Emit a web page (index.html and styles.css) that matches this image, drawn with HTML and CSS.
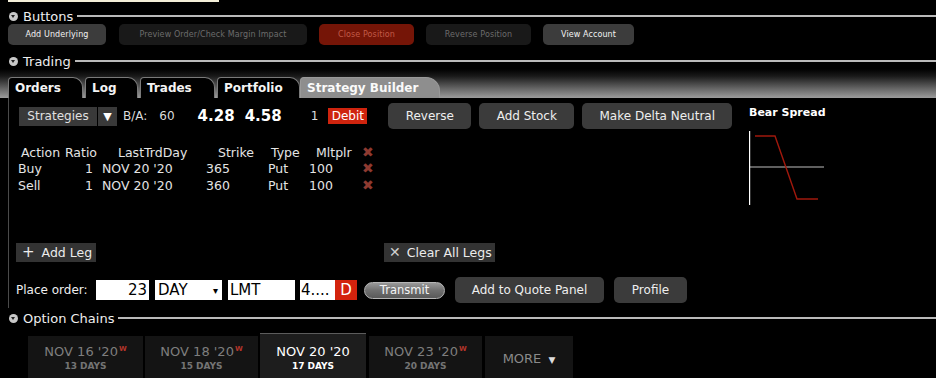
FILE: index.html
```html
<!DOCTYPE html>
<html lang="en">
<head>
    <meta charset="UTF-8">
    <title>Strategy Builder</title>
    <link rel="stylesheet" href="styles.css">
</head>
<body>
    <div class="top-strip"></div>

    <div class="section-head">
        <span class="toggle"></span>
        <span class="section-title">Buttons</span>
        <span class="section-line"></span>
    </div>
    <div class="top-buttons">
        <button class="tb tb-on w-under">Add Underlying</button>
        <button class="tb tb-off w-preview">Preview Order/Check Margin Impact</button>
        <button class="tb tb-red w-close">Close Position</button>
        <button class="tb tb-off w-rev">Reverse Position</button>
        <button class="tb tb-on w-view">View Account</button>
    </div>

    <div class="section-head trading-head">
        <span class="toggle"></span>
        <span class="section-title">Trading</span>
        <span class="section-line"></span>
    </div>
    <div class="tab-bar">
        <div class="tab w-orders">Orders</div>
        <div class="tab w-log">Log</div>
        <div class="tab w-trades">Trades</div>
        <div class="tab w-portfolio">Portfolio</div>
        <div class="tab tab-active w-sb">Strategy Builder</div>
    </div>

    <div class="panel">
        <div class="main">
            <div class="row-top">
                <div class="strategies">Strategies</div>
                <div class="dd">&#9660;</div>
                <span class="ba">B/A:</span>
                <span class="ba-size">60</span>
                <span class="price">4.28</span>
                <span class="price price-ask">4.58</span>
                <span class="qty">1</span>
                <span class="debit">Debit</span>
                <button class="btn w-reverse">Reverse</button>
                <button class="btn w-stock">Add Stock</button>
                <button class="btn w-delta">Make Delta Neutral</button>
            </div>

            <div class="legs">
                <div class="c1 h1">Action</div>
                <div class="c2 h2">Ratio</div>
                <div class="c3 h3">LastTrdDay</div>
                <div class="c4 h4">Strike</div>
                <div class="c5 h5">Type</div>
                <div class="c6 h6">Mltplr</div>
                <div class="c7">&#10006;</div>

                <div class="c1">Buy</div>
                <div class="c2">1</div>
                <div class="c3">NOV 20 '20</div>
                <div class="c4">365</div>
                <div class="c5">Put</div>
                <div class="c6">100</div>
                <div class="c7">&#10006;</div>

                <div class="c1">Sell</div>
                <div class="c2">1</div>
                <div class="c3">NOV 20 '20</div>
                <div class="c4">360</div>
                <div class="c5">Put</div>
                <div class="c6">100</div>
                <div class="c7">&#10006;</div>
            </div>

            <div class="row-legs">
                <div class="leg-btn w-add"><span class="leg-icon">+</span>Add Leg</div>
                <div class="leg-btn w-clear"><span class="leg-icon thin">&#10005;</span>Clear All Legs</div>
            </div>

            <div class="row-order">
                <span class="order-label">Place order:</span>
                <div class="field w-qty">23</div>
                <div class="field w-tif">DAY<span class="caret">&#9662;</span></div>
                <div class="field w-type">LMT</div>
                <div class="field w-price">4....</div>
                <div class="d-flag">D</div>
                <button class="transmit">Transmit</button>
                <button class="btn w-quote">Add to Quote Panel</button>
                <button class="btn w-profile">Profile</button>
            </div>
        </div>

        <div class="side">
            <div class="side-title">Bear Spread</div>
            <svg class="chart" width="76" height="76" viewBox="0 0 76 76">
                <line x1="0" y1="37" x2="75" y2="37" stroke="#bdbdbd" stroke-width="1.2"/>
                <polyline points="6,6 26,6 48,69 69,69" fill="none" stroke="#a0180c" stroke-width="1.4"/>
                <line x1="0.5" y1="1" x2="0.5" y2="75" stroke="#ffffff" stroke-width="1.4"/>
            </svg>
        </div>
    </div>

    <div class="section-head chains-head">
        <span class="toggle"></span>
        <span class="section-title">Option Chains</span>
        <span class="section-line"></span>
    </div>
    <div class="dates">
        <div class="date w-d1"><div class="date-name">NOV 16 '20<sup>W</sup></div><div class="date-days">13 DAYS</div></div>
        <div class="date w-d2"><div class="date-name">NOV 18 '20<sup>W</sup></div><div class="date-days">15 DAYS</div></div>
        <div class="date date-active w-d3"><div class="date-name">NOV 20 '20</div><div class="date-days">17 DAYS</div></div>
        <div class="date w-d4"><div class="date-name">NOV 23 '20<sup>W</sup></div><div class="date-days">20 DAYS</div></div>
        <div class="date w-more"><div class="more">MORE <span class="more-caret">&#9660;</span></div></div>
    </div>
</body>
</html>
```

FILE: styles.css
```css
body {
    margin: 0;
    background-color: #000;
    color: #e6e6e6;
    font-family: 'DejaVu Sans', sans-serif;
    font-size: 12px;
    width: 936px;
    height: 378px;
    overflow: hidden;
}

button {
    font-family: inherit;
    border: none;
    cursor: pointer;
    padding: 0;
}

.top-strip {
    width: 211px;
    height: 2px;
    margin-left: 8px;
    background-color: #f4efd9;
}

/* section headers */
.section-head {
    display: flex;
    align-items: center;
    height: 16px;
    margin-top: 6px;
    padding-left: 9px;
}

.toggle {
    width: 9px;
    height: 9px;
    border-radius: 50%;
    background-color: #c8c8c8;
    position: relative;
    margin-right: 5px;
}

.toggle::after {
    content: "";
    position: absolute;
    left: 2px;
    top: 3px;
    border-left: 2.5px solid transparent;
    border-right: 2.5px solid transparent;
    border-top: 3px solid #222;
}

.section-title {
    font-size: 13px;
    color: #eeeeee;
}

.section-line {
    flex: 1;
    height: 2px;
    background-color: #b9b9b9;
    margin-left: 4px;
}

/* top buttons */
.top-buttons {
    display: flex;
    gap: 12px;
    padding-left: 8px;
    height: 21px;
}

.tb {
    height: 21px;
    border-radius: 5px;
    font-size: 8px;
    letter-spacing: 0.1px;
}

.tb-on {
    background-color: #3c3c3c;
    color: #f2f2f2;
}

.tb-off {
    background-color: #191919;
    color: #6c6c6c;
}

.tb-red {
    background-color: #751507;
    color: #c25a48;
}

.w-under { width: 98px; }
.w-preview { width: 188px; margin-left: 1px; }
.w-close { width: 95px; }
.w-rev { width: 105px; }
.w-view { width: 91px; }

.trading-head {
    margin-top: 8px;
}

/* tab bar */
.tab-bar {
    display: flex;
    align-items: flex-end;
    gap: 2px;
    height: 29px;
    padding-left: 8px;
    background: linear-gradient(to bottom, #000 0%, #1a1a1a 25%, #6a6a6a 70%, #9c9c9c 100%);
}

.tab {
    height: 20px;
    background-color: #000;
    border: 1px solid #7a7a7a;
    border-bottom: none;
    border-radius: 4px 10px 0 0;
    font-weight: bold;
    font-size: 12px;
    color: #f4f4f4;
    padding-left: 6px;
    line-height: 21px;
}

.w-orders { width: 67px; }
.w-log { width: 45px; }
.w-trades { width: 67px; }
.w-portfolio { width: 75px; }

.tab-active {
    background-color: #8e8e8e;
    border-color: #9a9a9a;
    color: #fafafa;
    width: 132px;
    margin-left: -2px;
    border-radius: 4px 14px 0 0;
}

/* strategy builder panel */
.panel {
    display: flex;
    height: 210px;
    margin-left: 8px;
    border-left: 1px solid #4a4a4a;
}

.main {
    width: 732px;
    padding-left: 7px;
}

.row-top {
    display: flex;
    align-items: center;
    height: 26px;
    margin-top: 5px;
}

.strategies {
    width: 78px;
    height: 19px;
    line-height: 19px;
    margin-left: 3px;
    background-color: #393939;
    text-align: center;
    color: #e0e0e0;
}

.dd {
    width: 19px;
    height: 19px;
    line-height: 19px;
    margin-left: 1px;
    background-color: #393939;
    text-align: center;
    color: #fff;
    font-size: 11px;
}

.ba {
    margin-left: 6px;
    color: #dcdcdc;
}

.ba-size {
    margin-left: 12px;
    color: #dcdcdc;
}

.price {
    font-weight: bold;
    font-size: 15px;
    color: #fff;
    margin-left: 23px;
}

.price-ask {
    margin-left: 10px;
}

.qty {
    margin-left: 29px;
    color: #dcdcdc;
}

.debit {
    margin-left: 10px;
    width: 39px;
    height: 16px;
    line-height: 16px;
    text-align: center;
    background-color: #cf240e;
    color: #fff;
}

.btn {
    height: 26px;
    border-radius: 5px;
    background-color: #3b3b3b;
    color: #eeeeee;
    font-size: 12px;
}

.w-reverse { width: 83px; margin-left: 21px; }
.w-stock { width: 95px; margin-left: 8px; }
.w-delta { width: 150px; margin-left: 8px; }

/* legs table */
.legs {
    display: grid;
    grid-template-columns: 45px 35px 102px 65px 40px 55px 15px;
    grid-template-rows: 16px 16px 18px;
    align-items: center;
    margin-top: 15px;
    margin-left: 2px;
    color: #e4e4e4;
    font-size: 12.5px;
}

.c2 { text-align: right; padding-right: 5px; }
.c3 { padding-left: 4px; }
.c4 { padding-left: 6px; }
.c5 { padding-left: 3px; }
.c6 { padding-left: 4px; }
.c7 { padding-left: 2px; color: #8e3a30; font-size: 14px; }

.h1 { padding-left: 3px; }
.h2 { padding-right: 1px; }
.h3 { padding-left: 20px; }
.h4 { padding-left: 18px; }
.h5 { padding-left: 6px; }
.h6 { padding-left: 11px; }

.row-legs {
    display: flex;
    margin-top: 49px;
}

.leg-btn {
    height: 19px;
    line-height: 19px;
    background-color: #333;
    color: #ececec;
    font-size: 12.5px;
}

.leg-icon {
    font-size: 15px;
    margin: 0 7px 0 6px;
}

.leg-icon.thin {
    font-size: 14px;
    color: #cfcfcf;
    margin: 0 6px 0 5px;
}

.w-add { width: 80px; }
.w-clear { width: 111px; margin-left: 288px; }

.row-order {
    display: flex;
    align-items: center;
    height: 26px;
    margin-top: 15px;
}

.order-label {
    width: 80px;
    color: #efefef;
}

.field {
    height: 20px;
    line-height: 21px;
    background-color: #fff;
    color: #000;
    font-size: 15px;
    padding: 0 4px;
    box-sizing: border-box;
}

.w-qty { width: 53px; text-align: right; padding-right: 2px; }
.w-tif { width: 67px; margin-left: 6px; display: flex; justify-content: space-between; padding-left: 3px; }
.w-type { width: 67px; margin-left: 6px; padding-left: 2px; }
.w-price { width: 35px; margin-left: 5px; padding-left: 1px; }

.caret {
    font-size: 10px;
}

.d-flag {
    width: 22px;
    height: 20px;
    line-height: 21px;
    text-align: center;
    background-color: #d3230d;
    color: #fff;
    font-size: 15px;
}

.transmit {
    width: 81px;
    height: 17px;
    margin-left: 7px;
    border-radius: 9px;
    border: 1px solid #b5b5b5;
    background: linear-gradient(to bottom, #999 0%, #6f6f6f 50%, #595959 100%);
    color: #f4f4f4;
    font-size: 11.5px;
}

.w-quote { width: 149px; margin-left: 10px; }
.w-profile { width: 73px; margin-left: 10px; }

/* payoff diagram */
.side {
    padding-left: 1px;
}

.side-title {
    margin-top: 8px;
    font-weight: bold;
    font-size: 11px;
    color: #fff;
}

.chart {
    display: block;
    margin-top: 11px;
}

/* option chains */
.chains-head {
    margin-top: 2px;
}

.dates {
    display: flex;
    align-items: flex-start;
    margin-top: 7px;
    padding-left: 28px;
    gap: 2px;
}

.date {
    height: 42px;
    margin-top: 3px;
    background-color: #141414;
    text-align: center;
    color: #7e7e7e;
}

.date-name {
    font-size: 13px;
    margin-top: 8px;
}

.date-name sup {
    color: #b3342a;
    font-size: 7px;
    font-weight: bold;
    vertical-align: 5px;
    margin-left: 1px;
}

.date-days {
    font-size: 9px;
    font-weight: bold;
    color: #747474;
    margin-top: 2px;
}

.date-active {
    height: 44px;
    margin-top: 0;
    border-top: 1px solid #5c5c5c;
    background-color: #1d1d1d;
    color: #fff;
}

.date-active .date-name { margin-top: 10px; }
.date-active .date-days { color: #fff; }

.w-d1 { width: 115px; }
.w-d2 { width: 113px; }
.w-d3 { width: 106px; }
.w-d4 { width: 113px; margin-left: 1px; }
.w-more { width: 88px; margin-left: 1px; }

.more {
    margin-top: 15px;
    font-size: 13px;
    color: #8a8a8a;
}

.more-caret {
    font-size: 9px;
    color: #ddd;
    margin-left: 3px;
}
```
